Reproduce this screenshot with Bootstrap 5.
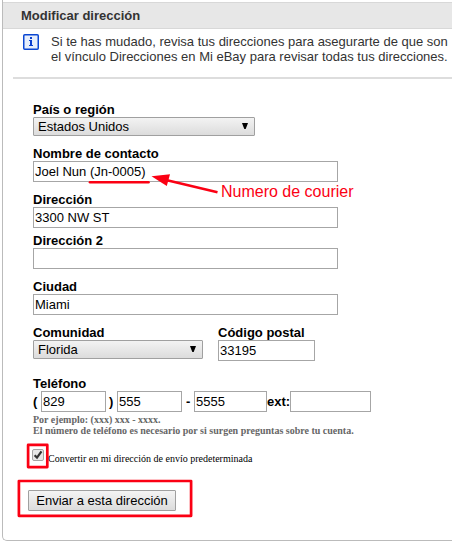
<!DOCTYPE html>
<html lang="es">
<head>
<meta charset="utf-8">
<meta name="viewport" content="width=device-width, initial-scale=1">
<title>Modificar dirección</title>
<link href="https://cdn.jsdelivr.net/npm/bootstrap@5.3.0/dist/css/bootstrap.min.css" rel="stylesheet">
<style>
body{font:13px/15px "Liberation Sans",Arial,sans-serif;color:#000;background:#fff;height:544px;overflow:hidden}
.address-panel{width:450px;height:541px;margin-left:2px;border-left:1px solid #bbb;border-bottom:1px solid #bbb;border-bottom-left-radius:5px;padding-top:2px}
.panel-title{height:27px;background:#e7e7e7;border:solid #d8d8d8;border-width:1px 0;color:#333;font:bold 13px/15px "Liberation Sans",Arial,sans-serif;padding:5px 0 0 18px}
.notice{height:50px;margin-left:10px;padding:5px 0 0 10px;gap:12px;border-bottom:2px solid #ddd;color:#333;white-space:nowrap}
.address-form{padding:23px 0 0 30px}
.address-form label{display:block;font-weight:bold;white-space:nowrap}
.gap-row{margin-bottom:10px}
.gap-tight{margin-bottom:5px}
.gap-wide{margin-bottom:15px}
.state-col{margin-right:15px}
.field,.field:focus{display:block;height:21px;border:1px solid #a6a6a6;border-radius:0;padding:0 1px;font:13px/19px "Liberation Sans",Arial,sans-serif;color:#000;background:#fff;box-shadow:none}
.w-line{width:305px}.w-zip{width:97px}.w-area{width:65px}.w-num{width:73px}.w-ext{width:81px}
.picker{position:relative;height:19px;border:1px solid #a0a0a0;border-radius:1px;background:linear-gradient(#f3f3f3,#dcdcdc);padding-left:4px;line-height:17px}
.picker svg{position:absolute;right:5px;top:5px}
.w-country{width:222px}.w-state{width:170px}
.phone-row{height:21px;line-height:21px;font-weight:bold}
.phone-row .sign{width:8px}
.phone-row .sep{width:11px;padding-left:3px}
.phone-row .dash{width:12px;padding-left:4px}
.phone-row .ext{width:23px}
.hint{font:bold 10px/11px "Liberation Serif","Times New Roman",serif;color:#666;padding-top:2px;white-space:nowrap}
.default-row{margin:13px 0 0 -1px;height:20px;gap:4px}
.default-row label{font:10px/12px "Liberation Serif","Times New Roman",serif;padding-top:4px}
.submit-row{margin:21px 0 0 -5px}
.submit-row .btn{width:148px;height:21px;padding:0;border:1px solid #a0a0a0;border-radius:1px;background:linear-gradient(#f4f4f4,#dcdcdc);color:#000;font:13px/19px "Liberation Sans",Arial,sans-serif;white-space:nowrap}
.annotation{left:0;top:0;pointer-events:none}
</style>
<script src="https://cdn.jsdelivr.net/npm/bootstrap@5.3.0/dist/js/bootstrap.bundle.min.js"></script>
</head>
<body class="position-relative">
<main class="address-panel">
  <h1 class="panel-title mb-0">Modificar dirección</h1>
  <div class="notice d-flex">
    <svg class="flex-shrink-0" width="16" height="16" viewBox="0 0 16 16"><rect x=".75" y=".75" width="14.5" height="14.5" rx="1" fill="#e6eefc" stroke="#0a46d2" stroke-width="1.5"/><path d="M7 3h2v2H7zM6 6h3v5h1v1H6v-1h1V7H6z" fill="#0a3fd0"/></svg>
    <div>Si te has mudado, revisa tus direcciones para asegurarte de que son<br>el vínculo Direcciones en Mi eBay para revisar todas tus direcciones.</div>
  </div>
  <form class="address-form">
    <div class="gap-row">
      <label>País o región</label>
      <div class="picker w-country" role="combobox">Estados Unidos<svg width="8" height="7"><path d="M1 0h6L4.700 6H3.300z"/></svg></div>
    </div>
    <div class="gap-row"><label for="name">Nombre de contacto</label><input id="name" class="form-control field w-line" value="Joel Nun (Jn-0005)"></div>
    <div class="gap-tight"><label for="street">Dirección</label><input id="street" class="form-control field w-line" value="3300 NW ST"></div>
    <div class="gap-row"><label for="street2">Dirección 2</label><input id="street2" class="form-control field w-line"></div>
    <div class="gap-row"><label for="city">Ciudad</label><input id="city" class="form-control field w-line" value="Miami"></div>
    <div class="d-flex gap-wide">
      <div class="state-col"><label>Comunidad</label><div class="picker w-state" role="combobox">Florida<svg width="8" height="7"><path d="M1 0h6L4.700 6H3.300z"/></svg></div></div>
      <div><label for="zip">Código postal</label><input id="zip" class="form-control field w-zip" value="33195"></div>
    </div>
    <label for="area">Teléfono</label>
    <div class="phone-row d-flex">
      <span class="sign">(</span><input id="area" class="form-control field w-area" value="829">
      <span class="sep">)</span><input class="form-control field w-area" value="555">
      <span class="dash">-</span><input class="form-control field w-num" value="5555">
      <span class="ext">ext:</span><input class="form-control field w-ext">
    </div>
    <div class="hint">Por ejemplo: (xxx) xxx - xxxx.<br>El número de teléfono es necesario por si surgen preguntas sobre tu cuenta.</div>
    <div class="default-row d-flex">
      <svg width="12" height="12" viewBox="0 0 12 12"><rect x=".5" y=".5" width="11" height="11" rx="1.500" fill="#e6e6e6" stroke="#a5a5a5"/><path d="M2.600 6.200l2.400 2.400L9.500 2.400" fill="none" stroke="#333" stroke-width="2.200"/></svg>
      <label>Convertir en mi dirección de envío predeterminada</label>
    </div>
    <div class="submit-row"><button type="button" class="btn d-block">Enviar a esta dirección</button></div>
  </form>
</main>
<svg class="annotation position-absolute" width="455" height="544">
  <path d="M90 182.200h58.500" fill="none" stroke="#fb0013" stroke-width="2.600" stroke-linecap="round"/>
  <path d="M217.500 192.200L166 180" stroke="#fb0013" stroke-width="2.500"/>
  <path d="M151.500 176.200L170 174.200L166.800 186z" fill="#fb0013"/>
  <text x="221" y="197" fill="#fb0013" font-family="Liberation Sans,Arial,sans-serif" font-size="16">Numero de courier</text>
  <g fill="none" stroke="#fb0013" stroke-width="2.700" stroke-linejoin="round">
    <rect x="28.100" y="444.900" width="19.200" height="22.200"/>
    <rect x="18.900" y="481" width="172.200" height="34.800"/>
  </g>
</svg>
</body>
</html>
